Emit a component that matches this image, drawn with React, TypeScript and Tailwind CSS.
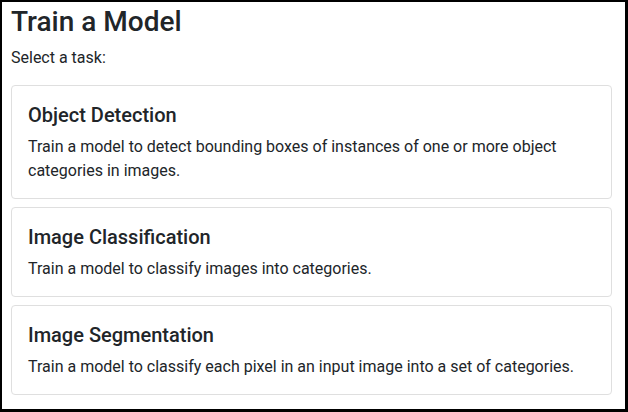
import React from 'react';

const tasks = [
  {
    title: 'Object Detection',
    text: 'Train a model to detect bounding boxes of instances of one or more object categories in images.',
  },
  {
    title: 'Image Classification',
    text: 'Train a model to classify images into categories.',
  },
  {
    title: 'Image Segmentation',
    text: 'Train a model to classify each pixel in an input image into a set of categories.',
  },
];

const App = () => {
  return (
    <div
      className="w-[628px] h-[412px] overflow-hidden bg-white border-black border-t-2 border-l-2 border-r-[3px] border-b-[3px] text-[#212529]"
      style={{ fontFamily: 'Roboto, "Liberation Sans", sans-serif' }}
    >
      <div className="pl-[9px] pr-[13px] pt-[3px]">
        <h2 className="text-[28px] leading-[1.2] font-medium mb-[7px]">Train a Model</h2>
        <p className="text-base leading-6 mb-[15px]">Select a task:</p>
        <div className="flex flex-col gap-2">
          {tasks.map((t) => (
            <div key={t.title} className="border border-[#dfdfdf] rounded px-4 pt-[17px] pb-[15px] bg-white">
              <h5 className="text-xl leading-[1.2] font-medium mb-2">{t.title}</h5>
              <p className="text-base leading-6">{t.text}</p>
            </div>
          ))}
        </div>
      </div>
    </div>
  );
};

export default App;
